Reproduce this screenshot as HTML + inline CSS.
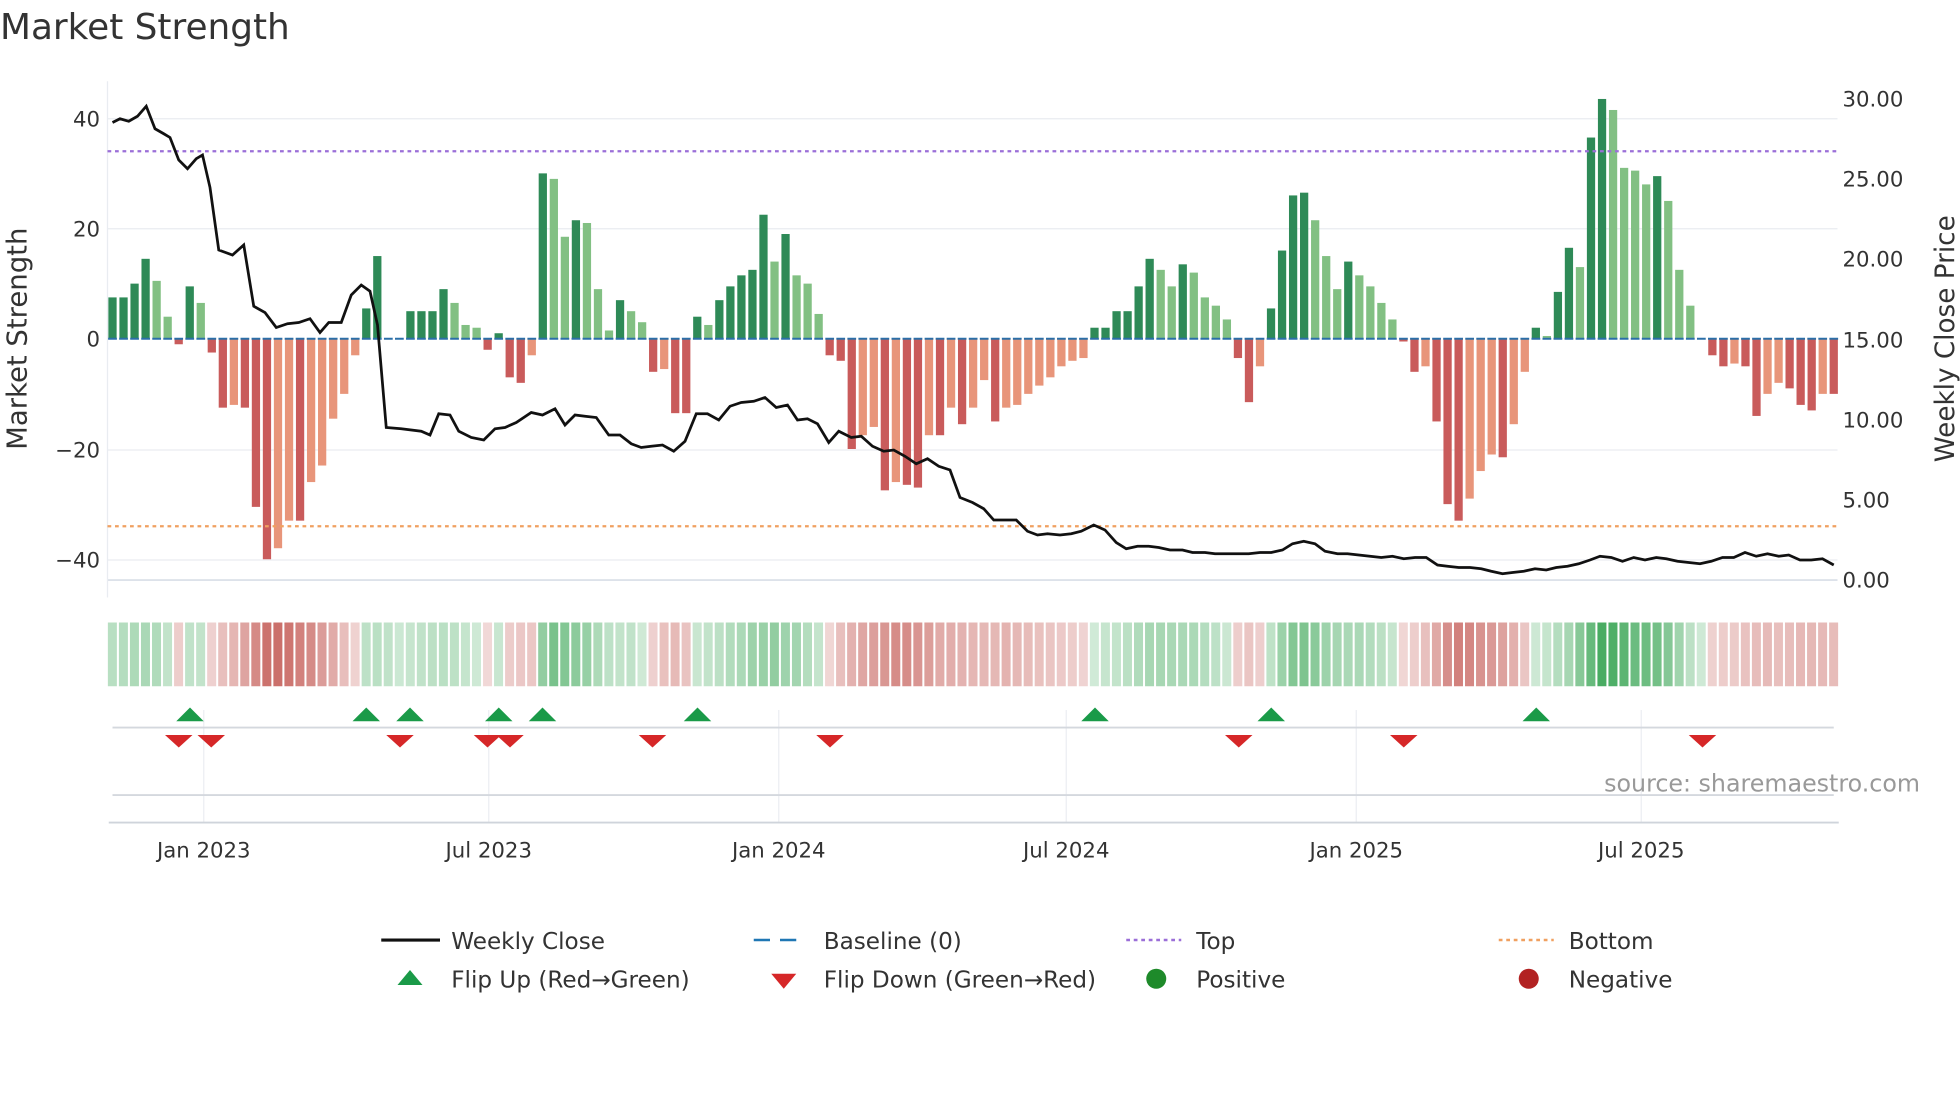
<!DOCTYPE html>
<html><head><meta charset="utf-8"><style>
html,body{margin:0;padding:0;background:#fff;}
svg{display:block;font-family:"DejaVu Sans","Liberation Sans",sans-serif;}
</style></head><body>
<svg id="s" width="1960" height="1102" viewBox="0 0 1568 881.6" xmlns="http://www.w3.org/2000/svg">
<text x="0" y="31" font-size="28.7" fill="#333">Market Strength</text>
<g stroke="#e9ecf1" stroke-width="1">
<line x1="86" y1="95" x2="1470" y2="95"/><line x1="86" y1="183" x2="1470" y2="183"/>
<line x1="86" y1="360" x2="1470" y2="360"/><line x1="86" y1="448" x2="1470" y2="448"/>
<line x1="86" y1="464" x2="1470" y2="464" stroke="#dde2ea" stroke-width="1.5"/>
<line x1="86" y1="65" x2="86" y2="478"/>
</g>
<g id="bars"></g>
<line x1="86" y1="121" x2="1470" y2="121" stroke="#9b6fd8" stroke-width="1.8" stroke-dasharray="3,3"/>
<line x1="86" y1="421" x2="1470" y2="421" stroke="#f0a060" stroke-width="1.8" stroke-dasharray="3,3"/>
<polyline id="price" fill="none" stroke="#111" stroke-width="2.2"/>
<g font-size="17" fill="#333" text-anchor="end">
<text x="80" y="101">40</text><text x="80" y="189">20</text><text x="80" y="277">0</text>
<text x="80" y="366">−20</text><text x="80" y="454">−40</text>
</g>
<g font-size="17" fill="#333">
<text x="1474" y="85">30.00</text><text x="1474" y="149">25.00</text><text x="1474" y="213">20.00</text>
<text x="1474" y="278">15.00</text><text x="1474" y="342">10.00</text><text x="1474" y="406">5.00</text><text x="1474" y="470">0.00</text>
</g>
<text transform="translate(21,271) rotate(-90)" font-size="22" fill="#333" text-anchor="middle">Market Strength</text>
<text transform="translate(1563,271) rotate(-90)" font-size="21" fill="#333" text-anchor="middle">Weekly Close Price</text>
<g id="heat"></g>
<g stroke="#eceef2" stroke-width="1">
<line x1="163" y1="568" x2="163" y2="658"/><line x1="391" y1="568" x2="391" y2="658"/>
<line x1="623" y1="568" x2="623" y2="658"/><line x1="853" y1="568" x2="853" y2="658"/>
<line x1="1085" y1="568" x2="1085" y2="658"/><line x1="1313" y1="568" x2="1313" y2="658"/>
</g>
<line x1="90" y1="582" x2="1467" y2="582" stroke="#d4d8de" stroke-width="1.5"/>
<line x1="90" y1="636" x2="1467" y2="636" stroke="#d4d8de" stroke-width="1.5"/>
<line x1="87" y1="658" x2="1471" y2="658" stroke="#cfd4db" stroke-width="1.5"/>
<g id="flips"></g>
<text x="1536" y="633" font-size="19" fill="#999" text-anchor="end">source: sharemaestro.com</text>
<g font-size="17" fill="#333" text-anchor="middle">
<text x="163" y="686">Jan 2023</text><text x="391" y="686">Jul 2023</text><text x="623" y="686">Jan 2024</text>
<text x="853" y="686">Jul 2024</text><text x="1085" y="686">Jan 2025</text><text x="1313" y="686">Jul 2025</text>
</g>
<g font-size="18.5" fill="#333">
<line x1="305" y1="752" x2="352" y2="752" stroke="#111" stroke-width="2.5"/><text x="361" y="759">Weekly Close</text>
<line x1="603" y1="752" x2="645" y2="752" stroke="#1f77b4" stroke-width="2" stroke-dasharray="13,8"/><text x="659" y="759">Baseline (0)</text>
<line x1="901" y1="752" x2="945" y2="752" stroke="#9b6fd8" stroke-width="2" stroke-dasharray="3,3"/><text x="957" y="759">Top</text>
<line x1="1199" y1="752" x2="1243" y2="752" stroke="#f0a060" stroke-width="2" stroke-dasharray="3,3"/><text x="1255" y="759">Bottom</text>
<polygon points="318,788 338,788 328,776" fill="#1a9a48"/><text x="361" y="790">Flip Up (Red→Green)</text>
<polygon points="617,779 637,779 627,791" fill="#d62728"/><text x="659" y="790">Flip Down (Green→Red)</text>
<circle cx="925" cy="783" r="8" fill="#1e8a2a"/><text x="957" y="790">Positive</text>
<circle cx="1223" cy="783" r="8" fill="#b22222"/><text x="1255" y="790">Negative</text>
</g>
</svg>
<script>
var V=[7.5,7.5,10,14.5,10.5,4,-1,9.5,6.5,-2.5,-12.5,-12,-12.5,-30.5,-40,-38,-33,-33,-26,-23,-14.5,-10,-3,5.5,15,0,0,5,5,5,9,6.5,2.5,2,-2,1,-7,-8,-3,30,29,18.5,21.5,21,9,1.5,7,5,3,-6,-5.5,-13.5,-13.5,4,2.5,7,9.5,11.5,12.5,22.5,14,19,11.5,10,4.5,-3,-4,-20,-17.5,-16,-27.5,-26,-26.5,-27,-17.5,-17.5,-12.5,-15.5,-12.5,-7.5,-15,-12.5,-12,-10,-8.5,-7,-5,-4,-3.5,2,2,5,5,9.5,14.5,12.5,9.5,13.5,12,7.5,6,3.5,-3.5,-11.5,-5,5.5,16,26,26.5,21.5,15,9,14,11.5,9.5,6.5,3.5,-0.5,-6,-5,-15,-30,-33,-29,-24,-21,-21.5,-15.5,-6,2,0.5,8.5,16.5,13,36.5,43.5,41.5,31,30.5,28,29.5,25,12.5,6,0,-3,-5,-4.5,-5,-14,-10,-8,-9,-12,-13,-10,-10];
var NS="http://www.w3.org/2000/svg";
function el(t,a,p){var e=document.createElementNS(NS,t);for(var k in a)e.setAttribute(k,a[k]);p.appendChild(e);return e;}
var bars=document.getElementById('bars'),heat=document.getElementById('heat');
var n=V.length,x0=90,step=(1467-90)/(n-1);
for(var i=0;i<n;i++){var v=V[i],x=x0+i*step,y0=271,h=Math.abs(v)*4.41;
 var prev=i?V[i-1]:0,col;
 if(v>=0) col=(Math.abs(v)>=Math.abs(prev)||prev<0)?'#2e8a57':'#82c083';
 else col=(Math.abs(v)>=Math.abs(prev)||prev>0)?'#c95b5b':'#e8957a';
 if(v!==0) el('rect',{x:x-3.3,y:v>0?y0-h:y0,width:6.6,height:h,fill:col},bars);
 el('line',{x1:x-3.5,y1:271,x2:x+3.5,y2:271,stroke:'#2a6fa8','stroke-width':1.6},bars);
 var sm=(V[Math.max(i-1,0)]+v+V[Math.min(i+1,n-1)])/3;
 var s=v>=0?1:-1,a=0.22+0.65*Math.min(Math.abs(sm)/40,1);
 el('rect',{x:x-3.7,y:498,width:7.2,height:51,fill:s>0?'#2ea04b':'#c0504a','fill-opacity':a},heat);
}
var P=[[90,98],[96,95],[103,97],[110,93],[117,85],[124,103],[131,107],[136,110],[143,128],[150,135],[157,127],[162,124],[168,150],[175,200],[186,204],[195,196],[203,245],[212,250],[221,262],[230,259],[239,258],[248,255],[256,266],[263,258],[273,258],[281,236],[289,228],[296,233],[302,260],[309,342],[321,343],[337,345],[344,348],[351,331],[360,332],[367,345],[377,350],[387,352],[396,343],[404,342],[413,338],[425,330],[434,332],[444,327],[452,340],[460,332],[468,333],[477,334],[487,348],[496,348],[505,355],[513,358],[521,357],[530,356],[539,361],[548,353],[557,331],[566,331],[575,336],[584,325],[593,322],[603,321],[612,318],[621,326],[630,324],[638,336],[646,335],[654,339],[663,354],[671,345],[681,350],[689,349],[698,357],[707,361],[715,360],[724,365],[733,371],[742,367],[751,373],[760,376],[768,398],[778,402],[787,407],[795,416],[804,416],[813,416],[822,425],[830,428],[838,427],[848,428],[857,427],[865,425],[875,420],[884,424],[893,434],[901,439],[910,437],[919,437],[927,438],[936,440],[946,440],[954,442],[964,442],[972,443],[981,443],[990,443],[999,443],[1008,442],[1017,442],[1026,440],[1034,435],[1043,433],[1052,435],[1060,441],[1070,443],[1078,443],[1087,444],[1096,445],[1105,446],[1114,445],[1123,447],[1132,446],[1141,446],[1150,452],[1158,453],[1167,454],[1176,454],[1185,455],[1193,457],[1202,459],[1210,458],[1219,457],[1228,455],[1237,456],[1245,454],[1254,453],[1263,451],[1272,448],[1280,445],[1289,446],[1298,449],[1307,446],[1316,448],[1325,446],[1333,447],[1342,449],[1351,450],[1360,451],[1369,449],[1378,446],[1387,446],[1396,442],[1405,445],[1414,443],[1423,445],[1431,444],[1440,448],[1449,448],[1458,447],[1467,452]];
document.getElementById('price').setAttribute('points',P.map(function(p){return p.join(',')}).join(' '));
var fl=document.getElementById('flips');
[152,293,328,399,434,558,876,1017,1229].forEach(function(x){el('polygon',{points:(x-11)+',577 '+(x+11)+',577 '+x+',566',fill:'#1a9a48'},fl);});
[143,169,320,390,408,522,664,991,1123,1362].forEach(function(x){el('polygon',{points:(x-11)+',588 '+(x+11)+',588 '+x+',598',fill:'#d62728'},fl);});
</script>
</body></html>
